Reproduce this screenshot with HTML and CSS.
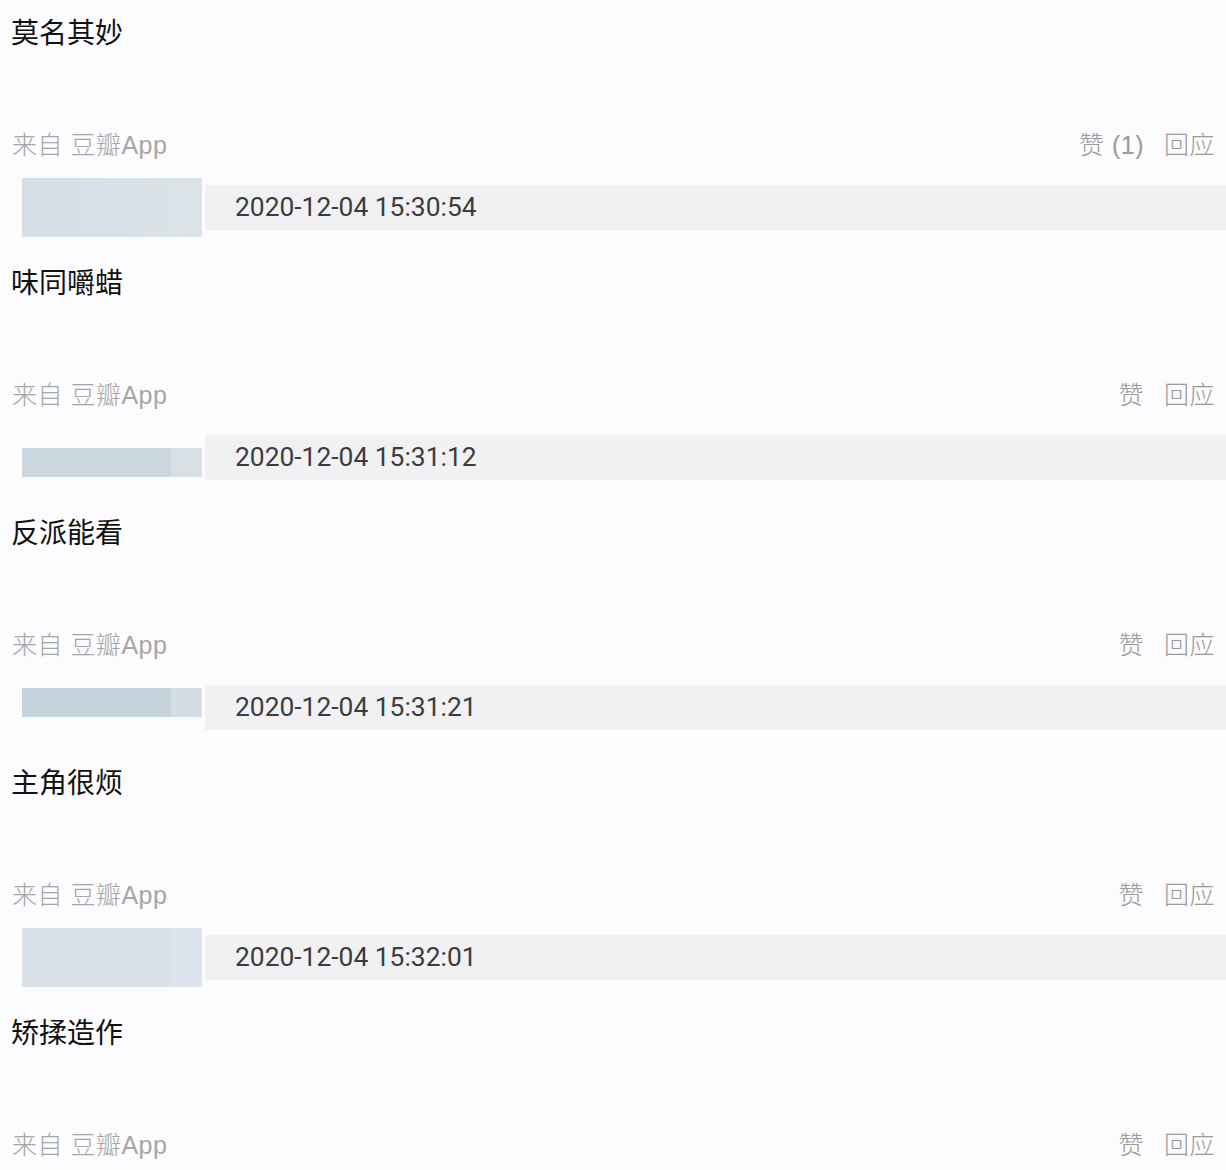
FILE: index.html
```html
<!DOCTYPE html>
<html lang="zh-CN">

<head>
    <meta charset="UTF-8">
    <title>短评</title>
    <link rel="stylesheet" href="styles.css">
</head>

<body>
    <div class="list">
        <div class="item">
            <p class="text">莫名其妙</p>
            <div class="meta">
                <span class="from">来自 豆瓣App</span>
                <span class="acts"><span>赞 (1)</span><span>回应</span></span>
            </div>
            <div class="row">
                <div class="blur b1"></div>
                <div class="bar">2020-12-04 15:30:54</div>
            </div>
        </div>
        <div class="item">
            <p class="text">味同嚼蜡</p>
            <div class="meta">
                <span class="from">来自 豆瓣App</span>
                <span class="acts"><span>赞</span><span>回应</span></span>
            </div>
            <div class="row">
                <div class="blur b2"></div>
                <div class="bar">2020-12-04 15:31:12</div>
            </div>
        </div>
        <div class="item">
            <p class="text">反派能看</p>
            <div class="meta">
                <span class="from">来自 豆瓣App</span>
                <span class="acts"><span>赞</span><span>回应</span></span>
            </div>
            <div class="row">
                <div class="blur b3"></div>
                <div class="bar">2020-12-04 15:31:21</div>
            </div>
        </div>
        <div class="item">
            <p class="text">主角很烦</p>
            <div class="meta">
                <span class="from">来自 豆瓣App</span>
                <span class="acts"><span>赞</span><span>回应</span></span>
            </div>
            <div class="row">
                <div class="blur b4"></div>
                <div class="bar">2020-12-04 15:32:01</div>
            </div>
        </div>
        <div class="item">
            <p class="text">矫揉造作</p>
            <div class="meta">
                <span class="from">来自 豆瓣App</span>
                <span class="acts"><span>赞</span><span>回应</span></span>
            </div>
        </div>
    </div>
</body>

</html>
```

FILE: styles.css
```css
body {
    margin: 0;
    background: #fcfbfd;
    font-family: "Noto Sans CJK SC", "Liberation Sans", sans-serif;
}

.list {
    padding-top: 12px;
}

.item {
    margin-bottom: 25px;
}

.text {
    margin: 0 0 73px 11px;
    height: 40px;
    line-height: 38px;
    font-size: 28px;
    color: #111;
}

.meta {
    display: flex;
    justify-content: space-between;
    height: 40px;
    line-height: 40px;
    margin: 0 11px 13px 12px;
    font-family: "Liberation Sans", "Noto Sans CJK SC", sans-serif;
    font-size: 25px;
    font-weight: 300;
    letter-spacing: 0.5px;
    color: #a6a6a6;
}

.acts {
    display: flex;
    gap: 20px;
    color: #9a9a9a;
}

.row {
    display: flex;
    align-items: flex-start;
    height: 59px;
}

.blur {
    width: 180px;
    height: 59px;
    margin-left: 22px;
    background: linear-gradient(90deg, #d4dee5, #dbe3e8);
}

.b2 {
    height: 29px;
    margin-top: 20px;
    background: linear-gradient(90deg, #cbd7df 83%, #d8e0e5 83%);
}

.b3 {
    height: 29px;
    margin-top: 10px;
    background: linear-gradient(90deg, #c5d3dc 83%, #d3dde3 83%);
}

.b4 {
    background: linear-gradient(90deg, #d9e0e8 83%, #dde3ec 83%);
}

.bar {
    flex: 1;
    align-self: center;
    height: 45px;
    line-height: 45px;
    margin-left: 3px;
    padding-left: 30px;
    background: #f1f1f3;
    font-family: Roboto, "Liberation Sans", sans-serif;
    font-size: 26.4px;
    color: #3c3c3c;
}
```
